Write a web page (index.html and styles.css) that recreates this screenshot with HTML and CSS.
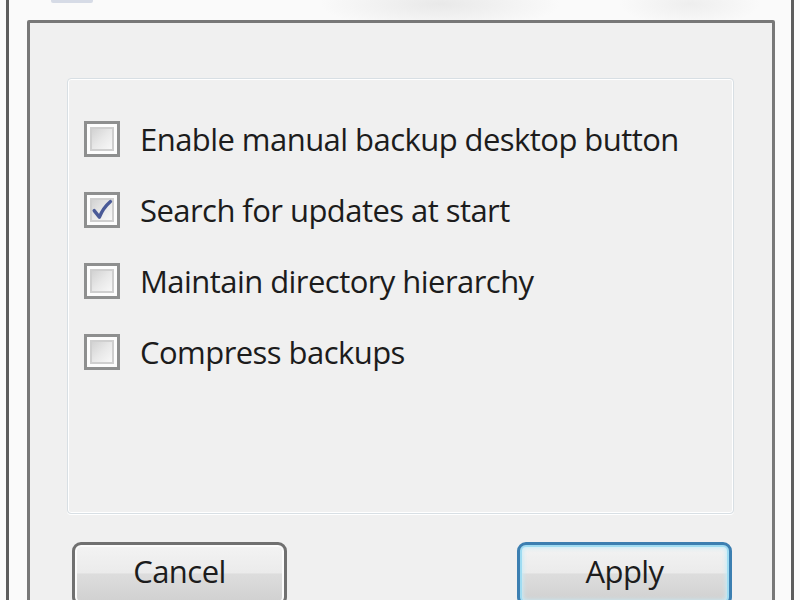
FILE: index.html
```html
<!DOCTYPE html>
<html>
<head>
<meta charset="utf-8">
<link rel="stylesheet" href="styles.css">
</head>
<body>
<div class="frame">
  <div class="titlebits"><span class="ticon"></span></div>
  <div class="panel">
    <div class="group">
      <label class="row"><span class="cb"></span><span class="lbl">Enable manual backup desktop button</span></label>
      <label class="row"><span class="cb checked"><svg viewBox="0 0 20 20" class="tick"><path d="M4 10.5 L8 15.5 C10 10.5 12.5 7 16.5 3.5" fill="none" stroke="#4a5a97" stroke-width="2.6" stroke-linecap="round" stroke-linejoin="round"/></svg></span><span class="lbl">Search for updates at start</span></label>
      <label class="row"><span class="cb"></span><span class="lbl">Maintain directory hierarchy</span></label>
      <label class="row"><span class="cb"></span><span class="lbl">Compress backups</span></label>
    </div>
    <div class="buttons">
      <button class="btn">Cancel</button>
      <button class="btn default">Apply</button>
    </div>
  </div>
</div>
</body>
</html>
```
FILE: styles.css
```css
html, body {
  margin: 0;
  height: 600px;
  overflow: hidden;
}
body {
  background:
    radial-gradient(ellipse 120px 26px at 440px 4px, rgba(200,200,200,0.35), rgba(255,255,255,0) 100%),
    radial-gradient(ellipse 70px 22px at 690px 4px, rgba(210,210,210,0.3), rgba(255,255,255,0) 100%),
    #fafafa;
  font-family: "Open Sans", "Liberation Sans", sans-serif;
  color: #1c1c1c;
}
.frame {
  margin-left: 6px;
  width: 788px;
  height: 600px;
  border-left: 3px solid #5c5c5c;
  border-right: 3px solid #5c5c5c;
  padding: 0 16px 0 18px;
  box-sizing: border-box;
}
.titlebits {
  height: 20px;
  position: relative;
}
.ticon {
  position: absolute;
  left: 24px;
  top: 0;
  width: 42px;
  height: 3px;
  background: #d6dbe6;
  border-radius: 0 0 2px 2px;
}
.panel {
  height: 640px;
  border: 3px solid #787878;
  border-radius: 2px;
  background: #f0f0f0;
  padding: 55px 38px 0 37px;
  box-sizing: border-box;
}
.group {
  height: 436px;
  border: 1px solid #d8dfe4;
  box-shadow: inset 0 0 0 1px #ffffff, 0 1px 0 #ffffff;
  border-radius: 4px;
  padding: 42px 0 0 16px;
  box-sizing: border-box;
  display: flex;
  flex-direction: column;
  gap: 35px;
}
.row {
  display: flex;
  align-items: center;
  height: 36px;
  gap: 20px;
}
.cb {
  width: 36px;
  height: 36px;
  box-sizing: border-box;
  border: 3px solid #8e8f8f;
  background: #fdfdfd;
  padding: 3px;
  flex: none;
  position: relative;
}
.cb::before {
  content: "";
  display: block;
  width: 100%;
  height: 100%;
  box-sizing: border-box;
  border: 2px solid #cfcfcf;
  background: linear-gradient(135deg, #d2d2d2 0%, #e8e8e8 50%, #f8f8f8 100%);
}
.tick {
  position: absolute;
  left: 2px;
  top: 2px;
  width: 26px;
  height: 26px;
}
.lbl {
  font-size: 31px;
  line-height: 36px;
  white-space: nowrap;
  letter-spacing: -0.55px;
}
.buttons {
  display: flex;
  justify-content: space-between;
  margin-top: 28px;
  padding: 0 2px 0 5px;
}
.btn {
  width: 215px;
  height: 64px;
  border: 3px solid #707070;
  border-radius: 9px;
  background: linear-gradient(to bottom, #f3f3f3 0%, #ebebeb 48%, #dddddd 50%, #d0d0d0 100%);
  box-shadow: inset 0 0 0 2px #fbfbfb;
  font-family: "Open Sans", "Liberation Sans", sans-serif;
  font-size: 31px;
  color: #1c1c1c;
  padding: 0 0 7px 0;
  letter-spacing: -0.55px;
}
.btn.default {
  border-color: #3c7fb1;
  box-shadow: inset 0 0 0 2px #9fdcf2, inset 0 0 4px 3px #c8ecf8;
}
```
